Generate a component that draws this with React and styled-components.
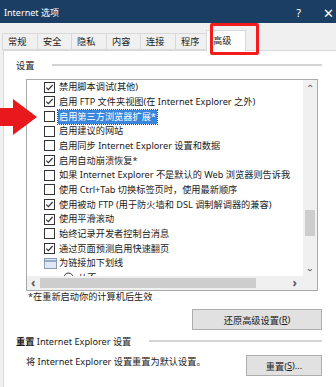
import React from 'react';
import styled, { createGlobalStyle } from 'styled-components';

const items = [
  { kind: 'check', checked: true, label: '禁用脚本调试(其他)' },
  { kind: 'check', checked: true, label: '启用 FTP 文件夹视图(在 Internet Explorer 之外)' },
  { kind: 'check', checked: false, label: '启用第三方浏览器扩展*', selected: true },
  { kind: 'check', checked: false, label: '启用建议的网站' },
  { kind: 'check', checked: false, label: '启用同步 Internet Explorer 设置和数据' },
  { kind: 'check', checked: true, label: '启用自动崩溃恢复*' },
  { kind: 'check', checked: false, label: '如果 Internet Explorer 不是默认的 Web 浏览器则告诉我' },
  { kind: 'check', checked: false, label: '使用 Ctrl+Tab 切换标签页时，使用最新顺序' },
  { kind: 'check', checked: true, label: '使用被动 FTP (用于防火墙和 DSL 调制解调器的兼容)' },
  { kind: 'check', checked: true, label: '使用平滑滚动' },
  { kind: 'check', checked: false, label: '始终记录开发者控制台消息' },
  { kind: 'check', checked: true, label: '通过页面预测启用快速翻页' },
  { kind: 'group', label: '为链接加下划线' },
  { kind: 'radio', label: '从不', indent: true },
];

const tabs = ['常规', '安全', '隐私', '内容', '连接', '程序', '高级'];
const tabWidths = [36, 35, 36, 35, 36, 32, 40];

const GlobalStyle = createGlobalStyle`
  body {
    margin: 0;
    font-family: "Noto Sans", "Noto Sans CJK SC", sans-serif;
    font-size: 9.2px;
    color: #1a1a1a;
  }
`;

function Check({ checked }) {
  return (
    <svg width="11" height="11" viewBox="0 0 11 11">
      <rect x="0.5" y="0.5" width="10" height="10" fill="#fff" stroke="#333" />
      {checked && <polyline points="2.3,5.6 4.4,7.7 8.6,3" fill="none" stroke="#333" strokeWidth="1.2" />}
    </svg>
  );
}

function GroupIcon() {
  return (
    <svg width="13" height="11" viewBox="0 0 13 11">
      <rect x="0.5" y="0.5" width="12" height="10" fill="#dfe9f5" stroke="#8a9bb0" />
      <line x1="1" y1="3" x2="12" y2="3" stroke="#7a93b5" strokeWidth="1.5" />
    </svg>
  );
}

function Radio() {
  return (
    <svg width="11" height="11" viewBox="0 0 11 11">
      <circle cx="5.5" cy="5.5" r="4.5" fill="#fff" stroke="#333" />
    </svg>
  );
}

function Arrow() {
  return (
    <svg width="38" height="37" viewBox="0 0 38 37">
      <polygon points="0,9 13,9 13,0 37,18 13,36 13,27 0,27" fill="#e8181d" />
    </svg>
  );
}

export default function App() {
  return (
    <>
      <GlobalStyle />
      <Window>
        <TitleBar>
          <Title>Internet 选项</Title>
          <TitleButtons>
            <span>?</span>
            <CloseGlyph>✕</CloseGlyph>
          </TitleButtons>
        </TitleBar>
        <TabRow>
          {tabs.map((t, i) => (
            <Tab key={t} active={i === 6} style={{ width: tabWidths[i] }}>
              {t}
            </Tab>
          ))}
        </TabRow>
        <Panel>
          <SectionHead>
            <span>设置</span>
            <Rule />
          </SectionHead>
          <ListBox>
            <ListArea>
              {items.map((it, i) => (
                <Row key={i} indent={it.indent}>
                  <IconSlot>
                    {it.kind === 'check' && <Check checked={it.checked} />}
                    {it.kind === 'group' && <GroupIcon />}
                    {it.kind === 'radio' && <Radio />}
                  </IconSlot>
                  <Label selected={it.selected}>{it.label}</Label>
                </Row>
              ))}
            </ListArea>
            <VScroll>
              <ScrollArrow>⌃</ScrollArrow>
              <VThumb />
              <ScrollArrow flip>⌃</ScrollArrow>
            </VScroll>
            <HScroll>
              <HArrow>‹</HArrow>
              <HThumb />
              <HArrow>›</HArrow>
            </HScroll>
            <Corner />
          </ListBox>
          <Footnote>*在重新启动你的计算机后生效</Footnote>
          <RightRow>
            <Button wide>还原高级设置(<u>R</u>)</Button>
          </RightRow>
          <SectionHead second>
            <strong>重置</strong>&nbsp;Internet Explorer 设置
            <Rule />
          </SectionHead>
          <ResetRow>
            <ResetText>将 Internet Explorer 设置重置为默认设置。</ResetText>
            <Button>重置(<u>S</u>)...</Button>
          </ResetRow>
        </Panel>
        <TabMarker />
        <ArrowMark>
          <Arrow />
        </ArrowMark>
      </Window>
    </>
  );
}

const Window = styled.div`
  position: relative;
  width: 336px;
  height: 387px;
  overflow: hidden;
  background: #f0f0f0;
  display: flex;
  flex-direction: column;
`;

const TitleBar = styled.div`
  height: 23px;
  background: #1b3e65;
  color: #fff;
  display: flex;
  align-items: center;
  justify-content: space-between;
  padding: 0 0 0 4px;
  flex-shrink: 0;
`;

const Title = styled.div`
  font-size: 9px;
  padding-top: 2px;
`;

const TitleButtons = styled.div`
  display: flex;
  align-items: center;
  gap: 22px;
  font-size: 11px;
  margin-right: 2px;
  padding-top: 2px;
`;

const CloseGlyph = styled.span`
  font-size: 13px;
`;

const TabRow = styled.div`
  height: 27px;
  display: flex;
  align-items: flex-end;
  padding-left: 3px;
  flex-shrink: 0;
`;

const Tab = styled.div`
  box-sizing: border-box;
  height: ${({ active }) => (active ? '21px' : '17px')};
  margin-bottom: ${({ active }) => (active ? '-1px' : '0')};
  border: 1px solid #d9d9d9;
  border-bottom: ${({ active }) => (active ? 'none' : '1px solid #d9d9d9')};
  margin-left: -1px;
  background: ${({ active }) => (active ? '#fff' : '#f0f0f0')};
  padding: ${({ active }) => (active ? '3px 0 0 6px' : '1px 0 0 5px')};
  line-height: 14px;
  position: relative;
  z-index: ${({ active }) => (active ? 2 : 1)};
`;

const Panel = styled.div`
  flex: 1;
  margin-left: 3px;
  background: #fff;
  border-left: 1px solid #d9d9d9;
  border-top: 1px solid #d9d9d9;
  padding: 8px 14px 0 12px;
  display: flex;
  flex-direction: column;
`;

const SectionHead = styled.div`
  display: flex;
  align-items: center;
  height: 14px;
  line-height: 14px;
  white-space: nowrap;
  margin-top: ${({ second }) => (second ? '5px' : '0')};
  strong {
    font-weight: 700;
  }
`;

const Rule = styled.div`
  flex: 1;
  height: 2px;
  background: #d4d4d4;
  margin-left: 18px;
  margin-top: -2px;
`;

const ListBox = styled.div`
  margin: 6px 0 0 10px;
  width: 292px;
  height: 212px;
  box-sizing: border-box;
  border: 1px solid #aaaaaa;
  display: grid;
  grid-template-columns: 1fr 14px;
  grid-template-rows: 1fr 14px;
`;

const ListArea = styled.div`
  overflow: hidden;
`;

const Row = styled.div`
  height: 14.67px;
  display: flex;
  align-items: center;
  padding-left: ${({ indent }) => (indent ? '36px' : '17px')};
  white-space: nowrap;
`;

const IconSlot = styled.div`
  width: 14px;
  height: 11px;
  display: flex;
  align-items: center;
`;

const Label = styled.span`
  padding: 0 1px;
  line-height: 14px;
  background: ${({ selected }) => (selected ? '#3a86dc' : 'transparent')};
  color: ${({ selected }) => (selected ? '#fff' : '#1a1a1a')};
  outline: ${({ selected }) => (selected ? '1px dotted #1d4f8f' : 'none')};
`;

const VScroll = styled.div`
  background: #f0f0f0;
  display: flex;
  flex-direction: column;
  align-items: center;
  justify-content: space-between;
  position: relative;
`;

const ScrollArrow = styled.div`
  font-size: 10px;
  color: #555;
  height: 14px;
  line-height: 16px;
  transform: ${({ flip }) => (flip ? 'rotate(180deg)' : 'none')};
`;

const VThumb = styled.div`
  position: absolute;
  top: 130px;
  width: 10px;
  height: 26px;
  background: #cdcdcd;
`;

const HScroll = styled.div`
  background: #f0f0f0;
  display: flex;
  align-items: center;
  justify-content: space-between;
  position: relative;
  padding: 0 6px 0 4px;
`;

const HArrow = styled.div`
  font-size: 12px;
  color: #555;
  font-weight: 700;
  line-height: 12px;
`;

const HThumb = styled.div`
  position: absolute;
  left: 13px;
  top: 2px;
  width: 216px;
  height: 10px;
  background: #cdcdcd;
`;

const Corner = styled.div`
  background: #f0f0f0;
`;

const Footnote = styled.div`
  margin-left: 12px;
  line-height: 12px;
  height: 12px;
`;

const RightRow = styled.div`
  display: flex;
  justify-content: flex-end;
  margin-top: 6px;
`;

const Button = styled.div`
  box-sizing: border-box;
  width: ${({ wide }) => (wide ? '130px' : '76px')};
  height: 21px;
  border: 1px solid #adadad;
  background: #e1e1e1;
  display: flex;
  align-items: center;
  justify-content: center;
  u {
    text-decoration: underline;
  }
`;

const ResetRow = styled.div`
  display: flex;
  justify-content: space-between;
  align-items: flex-start;
  margin-top: 6px;
`;

const ResetText = styled.div`
  margin-left: 10px;
  line-height: 14px;
`;

const TabMarker = styled.div`
  position: absolute;
  left: 210px;
  top: 23px;
  width: 49px;
  height: 32px;
  box-sizing: border-box;
  border: 3px solid #f21c1c;
  border-radius: 2px;
  z-index: 5;
`;

const ArrowMark = styled.div`
  position: absolute;
  left: 0;
  top: 99px;
  z-index: 5;
  display: flex;
`;
